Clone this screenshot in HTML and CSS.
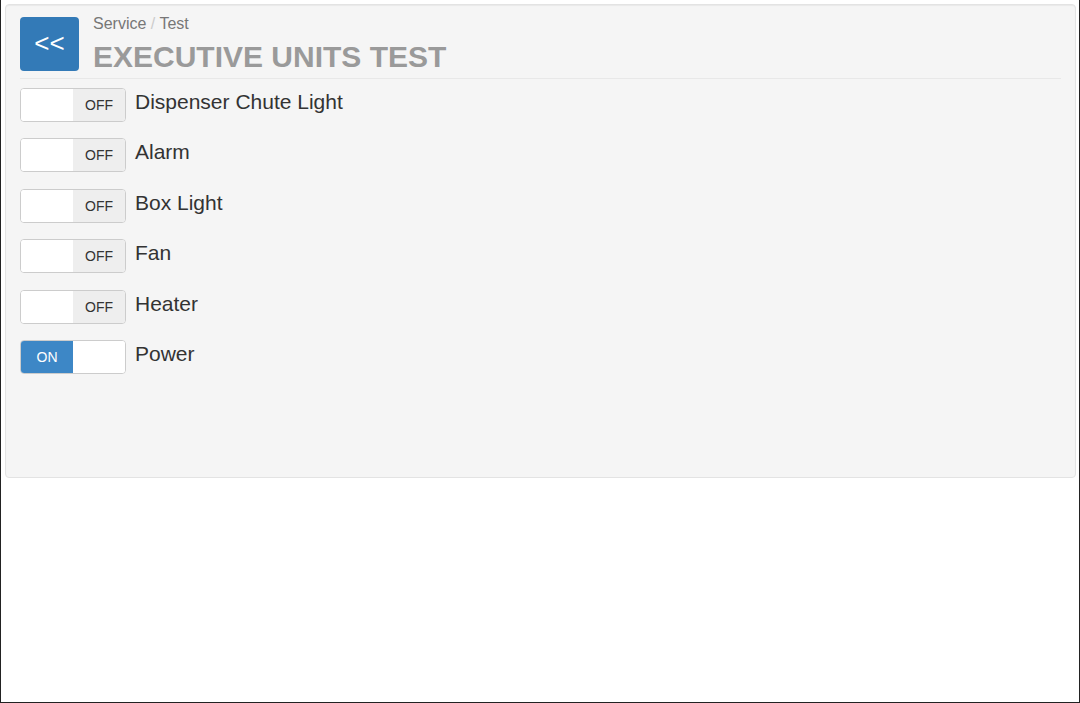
FILE: index.html
```html
<!DOCTYPE html>
<html>
<head>
<meta charset="utf-8">
<link rel="stylesheet" href="styles.css">
</head>
<body>
<div class="well">
  <div class="header">
    <div class="back">&lt;&lt;</div>
    <div class="titles">
      <div class="crumb">Service <span class="sep">/</span> Test</div>
      <div class="title">EXECUTIVE UNITS TEST</div>
    </div>
  </div>
  <div class="row"><div class="switch"><span class="blank"></span><span class="off">OFF</span></div><div class="label">Dispenser Chute Light</div></div>
  <div class="row"><div class="switch"><span class="blank"></span><span class="off">OFF</span></div><div class="label">Alarm</div></div>
  <div class="row"><div class="switch"><span class="blank"></span><span class="off">OFF</span></div><div class="label">Box Light</div></div>
  <div class="row"><div class="switch"><span class="blank"></span><span class="off">OFF</span></div><div class="label">Fan</div></div>
  <div class="row"><div class="switch"><span class="blank"></span><span class="off">OFF</span></div><div class="label">Heater</div></div>
  <div class="row"><div class="switch"><span class="on">ON</span><span class="blank"></span></div><div class="label">Power</div></div>
</div>
</body>
</html>
```
FILE: styles.css
```css
html, body {
  margin: 0;
  padding: 0;
}
body {
  height: 703px;
  box-sizing: border-box;
  border-left: 1px solid #222;
  border-right: 1px solid #222;
  border-bottom: 1px solid #222;
  background: #fff;
  font-family: "Liberation Sans", Arial, sans-serif;
  overflow: hidden;
}
.well {
  margin: 4px 3px 0 4px;
  padding: 12px 14px 0 14px;
  height: 474px;
  box-sizing: border-box;
  background: #f5f5f5;
  border: 1px solid #e3e3e3;
  border-radius: 4px;
  box-shadow: inset 0 1px 1px rgba(0,0,0,0.05);
}
.header {
  display: flex;
  align-items: flex-start;
  gap: 14px;
  height: 62px;
  box-sizing: border-box;
  border-bottom: 1px solid #e8e8e8;
  margin-bottom: 9px;
}
.back {
  width: 59px;
  height: 54px;
  background: #337ab7;
  border-radius: 4px;
  color: #fff;
  font-size: 26px;
  line-height: 52px;
  text-align: center;
  flex: none;
}
.titles {
  margin-top: -3px;
}
.crumb {
  font-size: 16px;
  line-height: 20px;
  color: #777;
}
.sep {
  color: #ccc;
}
.title {
  margin-top: 5px;
  font-size: 30px;
  line-height: 36px;
  font-weight: bold;
  color: #9a9a9a;
}
.row {
  display: flex;
  align-items: flex-start;
  gap: 9px;
  margin-bottom: 16.4px;
}
.switch {
  display: flex;
  width: 106px;
  height: 34px;
  box-sizing: border-box;
  border: 1px solid #ccc;
  border-radius: 4px;
  overflow: hidden;
  flex: none;
  background: #fff;
}
.switch span {
  width: 52px;
  height: 32px;
  line-height: 32px;
  text-align: center;
  font-size: 14px;
}
.blank {
  background: #fff;
}
.off {
  background: #eee;
  color: #333;
}
.on {
  background: #3d87c6;
  color: #fff;
}
.label {
  font-size: 21px;
  line-height: 28px;
  color: #333;
}
```
